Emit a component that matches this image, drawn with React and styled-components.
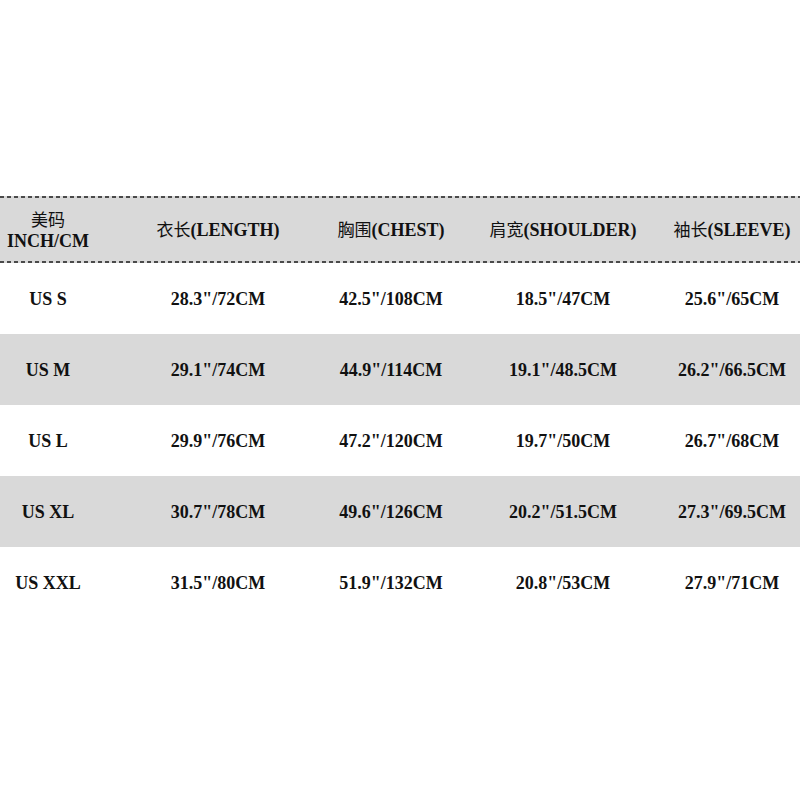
import React from "react";
import styled, { createGlobalStyle } from "styled-components";

const GlobalStyle = createGlobalStyle`
  html, body {
    margin: 0;
    padding: 0;
    background: #fff;
  }
`

const Page = styled.div`
  width: 800px;
  height: 800px;
  padding-top: 196px;
  box-sizing: border-box;
  background: #fff;
  font-family: "Liberation Serif", "Times New Roman", "Noto Sans CJK SC", serif;
  font-weight: 700;
  font-size: 18px;
  color: #111;
`
const Rule = styled.div`
  height: 2px;
  background: repeating-linear-gradient(to right, #4a4a4a 0 4px, transparent 4px 7px);
  background-color: #d9d9d9;
`
const Row = styled.div`
  display: grid;
  grid-template-columns: 96px 244px 102px 242px 96px;
  height: ${props => props.$height}px;
  background: ${props => (props.$shaded ? "#d9d9d9" : "#fff")};
`
const Cell = styled.div`
  display: flex;
  flex-direction: column;
  align-items: center;
  justify-content: center;
  white-space: nowrap;
  line-height: 22px;
`
const Cjk = styled.span`
  font-family: "Noto Sans CJK SC", serif;
  font-weight: 400;
  font-size: 17px;
`

const headers = [
  { cn: "衣长", en: "(LENGTH)" },
  { cn: "胸围", en: "(CHEST)" },
  { cn: "肩宽", en: "(SHOULDER)" },
  { cn: "袖长", en: "(SLEEVE)" },
];

const sizes = [
  ["US S", '28.3"/72CM', '42.5"/108CM', '18.5"/47CM', '25.6"/65CM'],
  ["US M", '29.1"/74CM', '44.9"/114CM', '19.1"/48.5CM', '26.2"/66.5CM'],
  ["US L", '29.9"/76CM', '47.2"/120CM', '19.7"/50CM', '26.7"/68CM'],
  ["US XL", '30.7"/78CM', '49.6"/126CM', '20.2"/51.5CM', '27.3"/69.5CM'],
  ["US XXL", '31.5"/80CM', '51.9"/132CM', '20.8"/53CM', '27.9"/71CM'],
];

const App = () => (
  <Page>
    <GlobalStyle />
    <Rule />
    <Row $height={63} $shaded>
      <Cell>
        <Cjk>美码</Cjk>
        <span>INCH/CM</span>
      </Cell>
      {headers.map(h => (
        <Cell key={h.en}>
          <span><Cjk>{h.cn}</Cjk>{h.en}</span>
        </Cell>
      ))}
    </Row>
    <Rule />
    {sizes.map((row, i) => (
      <Row key={row[0]} $height={71} $shaded={i % 2 === 1}>
        {row.map(v => (
          <Cell key={v}>{v}</Cell>
        ))}
      </Row>
    ))}
  </Page>
);

export default App;
